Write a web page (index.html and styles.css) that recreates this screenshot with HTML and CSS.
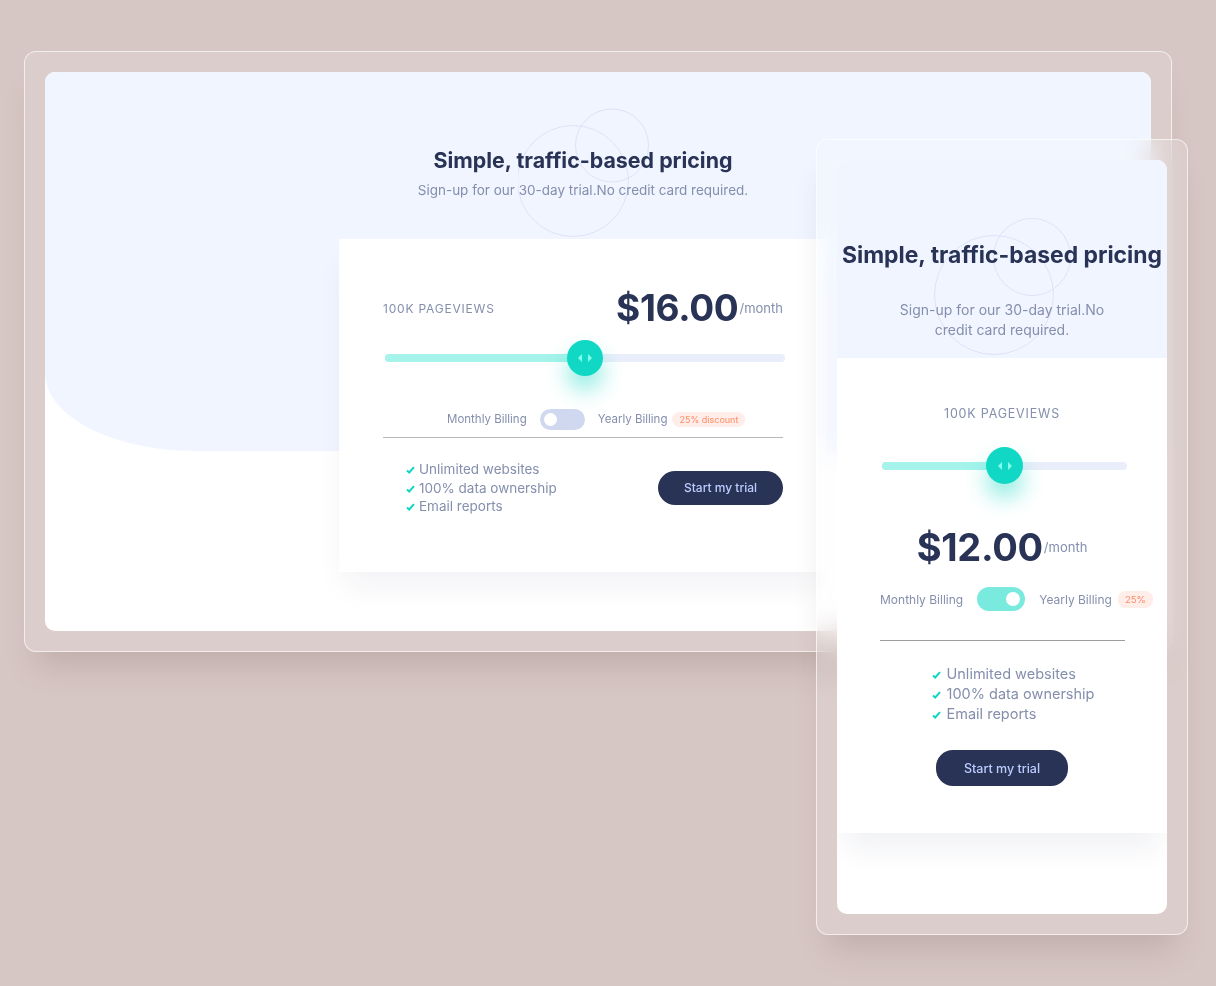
FILE: index.html
```html
<!DOCTYPE html>
<html lang="en">
<head>
    <meta charset="UTF-8">
    <meta name="viewport" content="width=device-width, initial-scale=1.0">
    <title>Interactive Pricing Component - Preview</title>
    <link rel="stylesheet" href="styles.css">
</head>
<body>
    <div class="stage">

        <!-- desktop preview -->
        <div class="device device-desktop">
            <div class="screen screen-desktop">
                <svg class="circles circles-desktop" width="146" height="146" viewBox="0 0 146 146">
                    <circle cx="55" cy="73" r="55.5" fill="none" stroke="#dfe2f6" stroke-width="1"/>
                    <circle cx="94" cy="37.5" r="36.5" fill="none" stroke="#dfe2f6" stroke-width="1"/>
                </svg>
                <div class="desk-content">
                    <h1 class="title">Simple, traffic-based pricing</h1>
                    <p class="subtitle">Sign-up for our 30-day trial.No credit card required.</p>

                    <div class="card card-desktop">
                        <div class="price-row">
                            <span class="pageviews">100K Pageviews</span>
                            <span class="price"><strong>$16.00</strong><span class="per">/month</span></span>
                        </div>

                        <div class="slider">
                            <div class="track"><div class="fill" style="width: 50%"></div></div>
                            <div class="thumb" style="left: 50%">
                                <svg width="14" height="8" viewBox="0 0 14 8"><path d="M4 0v8L0 4z M10 0v8l4-4z" fill="#80ffec"/></svg>
                            </div>
                        </div>

                        <div class="billing">
                            <span>Monthly Billing</span>
                            <span class="toggle"><span class="knob"></span></span>
                            <span>Yearly Billing</span>
                            <span class="badge">25% discount</span>
                        </div>

                        <div class="divider"></div>

                        <div class="card-foot">
                            <ul class="features">
                                <li><svg width="9" height="8" viewBox="0 0 9 8"><path d="M1 4.5l2.2 2L8 1.2" fill="none" stroke="#10d5c2" stroke-width="2"/></svg>Unlimited websites</li>
                                <li><svg width="9" height="8" viewBox="0 0 9 8"><path d="M1 4.5l2.2 2L8 1.2" fill="none" stroke="#10d5c2" stroke-width="2"/></svg>100% data ownership</li>
                                <li><svg width="9" height="8" viewBox="0 0 9 8"><path d="M1 4.5l2.2 2L8 1.2" fill="none" stroke="#10d5c2" stroke-width="2"/></svg>Email reports</li>
                            </ul>
                            <button class="btn">Start my trial</button>
                        </div>
                    </div>
                </div>
            </div>
        </div>

        <!-- mobile preview -->
        <div class="device device-mobile">
            <div class="screen screen-mobile">
                <div class="mob-hero">
                    <svg class="circles circles-mobile" width="140" height="140" viewBox="0 0 140 140">
                        <circle cx="60" cy="77" r="59.5" fill="none" stroke="#dfe2f6" stroke-width="1"/>
                        <circle cx="98" cy="39" r="38.5" fill="none" stroke="#dfe2f6" stroke-width="1"/>
                    </svg>
                    <h1 class="title title-mobile">Simple, traffic-based pricing</h1>
                    <p class="subtitle subtitle-mobile">Sign-up for our 30-day trial.No credit card required.</p>
                </div>

                <div class="card card-mobile">
                    <span class="pageviews pageviews-mobile">100K Pageviews</span>

                    <div class="slider slider-mobile">
                        <div class="track"><div class="fill" style="width: 50%"></div></div>
                        <div class="thumb" style="left: 50%">
                            <svg width="14" height="8" viewBox="0 0 14 8"><path d="M4 0v8L0 4z M10 0v8l4-4z" fill="#80ffec"/></svg>
                        </div>
                    </div>

                    <span class="price price-mobile"><strong>$12.00</strong><span class="per">/month</span></span>

                    <div class="billing billing-mobile">
                        <span>Monthly Billing</span>
                        <span class="toggle toggle-on"><span class="knob"></span></span>
                        <span>Yearly Billing</span>
                        <span class="badge">25%</span>
                    </div>

                    <div class="divider divider-mobile"></div>

                    <ul class="features features-mobile">
                        <li><svg width="9" height="8" viewBox="0 0 9 8"><path d="M1 4.5l2.2 2L8 1.2" fill="none" stroke="#10d5c2" stroke-width="2"/></svg>Unlimited websites</li>
                        <li><svg width="9" height="8" viewBox="0 0 9 8"><path d="M1 4.5l2.2 2L8 1.2" fill="none" stroke="#10d5c2" stroke-width="2"/></svg>100% data ownership</li>
                        <li><svg width="9" height="8" viewBox="0 0 9 8"><path d="M1 4.5l2.2 2L8 1.2" fill="none" stroke="#10d5c2" stroke-width="2"/></svg>Email reports</li>
                    </ul>

                    <button class="btn btn-mobile">Start my trial</button>
                </div>
            </div>
        </div>

    </div>
</body>
</html>
```

FILE: styles.css
```css
* {
    box-sizing: border-box;
}
body {
    margin: 0;
    background-color: #d7c7c4;
    font-family: "Inter", "Liberation Sans", sans-serif;
    color: #858fad;
}
.stage {
    position: relative;
    width: 1216px;
    height: 986px;
    overflow: hidden;
}

/* device frames */
.device {
    position: absolute;
    padding: 20px;
    border: 1px solid rgba(255, 255, 255, 0.65);
    border-radius: 12px;
    background-color: rgba(255, 255, 255, 0.12);
    backdrop-filter: blur(14px);
    box-shadow: 0 26px 30px -12px rgba(90, 60, 55, 0.18);
}
.device-desktop {
    left: 24px;
    top: 51px;
    width: 1148px;
    height: 601px;
}
.device-mobile {
    left: 816px;
    top: 139px;
    width: 372px;
    height: 796px;
    z-index: 2;
}
.screen {
    position: relative;
    height: 100%;
    background-color: #fff;
    border-radius: 10px;
    overflow: hidden;
}
.screen-desktop::before {
    content: "";
    position: absolute;
    left: 0;
    top: 0;
    right: 0;
    height: 379px;
    background-color: #f0f5ff;
    border-bottom-left-radius: 150px 78px;
}
.circles {
    position: absolute;
}
.circles-desktop {
    left: 473px;
    top: 36px;
}
.circles-mobile {
    left: 97px;
    top: 58px;
}

/* headings */
.title {
    position: relative;
    margin: 0;
    font-size: 21.4px;
    line-height: 28px;
    font-weight: 700;
    color: #293356;
}
.subtitle {
    position: relative;
    margin: 6px 0 0;
    font-size: 13.5px;
    line-height: 20px;
    color: #858fad;
}

/* desktop layout */
.desk-content {
    position: relative;
    width: 1076px;
    padding-top: 74px;
    display: flex;
    flex-direction: column;
    align-items: center;
}
.card {
    background-color: #fff;
}
.card-desktop {
    width: 488px;
    height: 333px;
    margin-top: 39px;
    padding: 47px 44px 0;
    box-shadow: 0 20px 30px -6px rgba(30, 40, 80, 0.06);
}
.price-row {
    display: flex;
    justify-content: space-between;
    align-items: center;
    height: 44px;
}
.pageviews {
    font-size: 12px;
    letter-spacing: 0.8px;
    text-transform: uppercase;
    color: #858fad;
}
.price {
    display: flex;
    align-items: center;
}
.price strong {
    font-size: 37px;
    line-height: 44px;
    font-weight: 700;
    color: #293356;
    letter-spacing: -0.3px;
}
.per {
    font-size: 13px;
    color: #858fad;
    margin-left: 1px;
}

/* slider */
.slider {
    position: relative;
    height: 40px;
    margin: 8px -2px 0 2px;
    display: flex;
    align-items: center;
}
.track {
    width: 100%;
    height: 8px;
    border-radius: 4px;
    background-color: #eaeefb;
    overflow: hidden;
}
.fill {
    height: 100%;
    background-color: #a5f3eb;
}
.thumb {
    position: absolute;
    top: 2px;
    width: 36px;
    height: 36px;
    margin-left: -18px;
    border-radius: 50%;
    background-color: #10d8c4;
    box-shadow: 0 14px 22px rgba(16, 216, 196, 0.45);
    display: flex;
    align-items: center;
    justify-content: center;
}

/* billing */
.billing {
    display: flex;
    align-items: center;
    height: 24px;
    margin-top: 29px;
    padding-left: 64px;
    font-size: 11.5px;
    color: #858fad;
}
.toggle {
    position: relative;
    width: 45px;
    height: 21px;
    margin: 0 13px;
    border-radius: 11px;
    background-color: #cfd8ef;
}
.knob {
    position: absolute;
    top: 4px;
    left: 4px;
    width: 13px;
    height: 13px;
    border-radius: 50%;
    background-color: #fff;
}
.badge {
    margin-left: 5px;
    padding: 2px 7px;
    border-radius: 8px;
    background-color: #feede8;
    color: #ff8d68;
    font-size: 9px;
    line-height: 11px;
}
.divider {
    height: 1px;
    margin-top: 6px;
    background-color: #b9b9bd;
}
.card-foot {
    display: flex;
    justify-content: space-between;
    align-items: center;
    margin-top: 22px;
    padding-left: 23px;
}
.features {
    list-style: none;
    margin: 0;
    padding: 0;
    font-size: 13.5px;
    line-height: 18.5px;
    color: #858fad;
}
.features li {
    display: flex;
    align-items: center;
}
.features svg {
    margin-right: 4px;
    margin-top: 2px;
}
.btn {
    width: 125px;
    height: 34px;
    border: none;
    border-radius: 17px;
    background-color: #293356;
    color: #bdccff;
    font-family: inherit;
    font-size: 12px;
    font-weight: 500;
}

/* mobile layout */
.mob-hero {
    position: relative;
    height: 198px;
    background-color: #f0f5ff;
    padding-top: 81px;
    display: flex;
    flex-direction: column;
    align-items: center;
    text-align: center;
}
.title-mobile {
    font-size: 22.9px;
    white-space: nowrap;
}
.subtitle-mobile {
    width: 220px;
    margin-top: 31px;
    font-size: 14px;
    line-height: 20px;
}
.card-mobile {
    height: 475px;
    display: flex;
    flex-direction: column;
    align-items: center;
    box-shadow: 0 22px 30px -8px rgba(30, 40, 80, 0.07);
}
.pageviews-mobile {
    margin-top: 46px;
    font-size: 12.5px;
    line-height: 20px;
}
.slider-mobile {
    width: 245px;
    margin: 22px 0 0 4px;
}
.slider-mobile .thumb {
    width: 37px;
    height: 37px;
    top: 1px;
}
.price-mobile {
    margin-top: 37px;
    height: 48px;
}
.price-mobile strong {
    font-size: 38px;
    line-height: 48px;
}
.billing-mobile {
    align-self: stretch;
    margin-top: 16px;
    padding-left: 43px;
    font-size: 12px;
}
.billing-mobile .toggle {
    width: 48px;
    height: 24px;
    border-radius: 12px;
    margin: 0 14px;
}
.toggle-on {
    background-color: #7aeadf;
}
.toggle-on .knob {
    top: 5px;
    left: auto;
    right: 5px;
    width: 14px;
    height: 14px;
}
.billing-mobile .badge {
    margin-left: 6px;
    font-size: 9.5px;
    padding: 3px 7px;
}
.divider-mobile {
    width: 245px;
    margin: 29px 0 0 0;
    background-color: #9e9ea2;
}
.features-mobile {
    margin-top: 23px;
    margin-left: 22px;
    font-size: 14.5px;
    line-height: 20px;
}
.features-mobile svg {
    margin-right: 6px;
}
.btn-mobile {
    width: 132px;
    height: 36px;
    margin-top: 26px;
    font-size: 12.5px;
}
```
